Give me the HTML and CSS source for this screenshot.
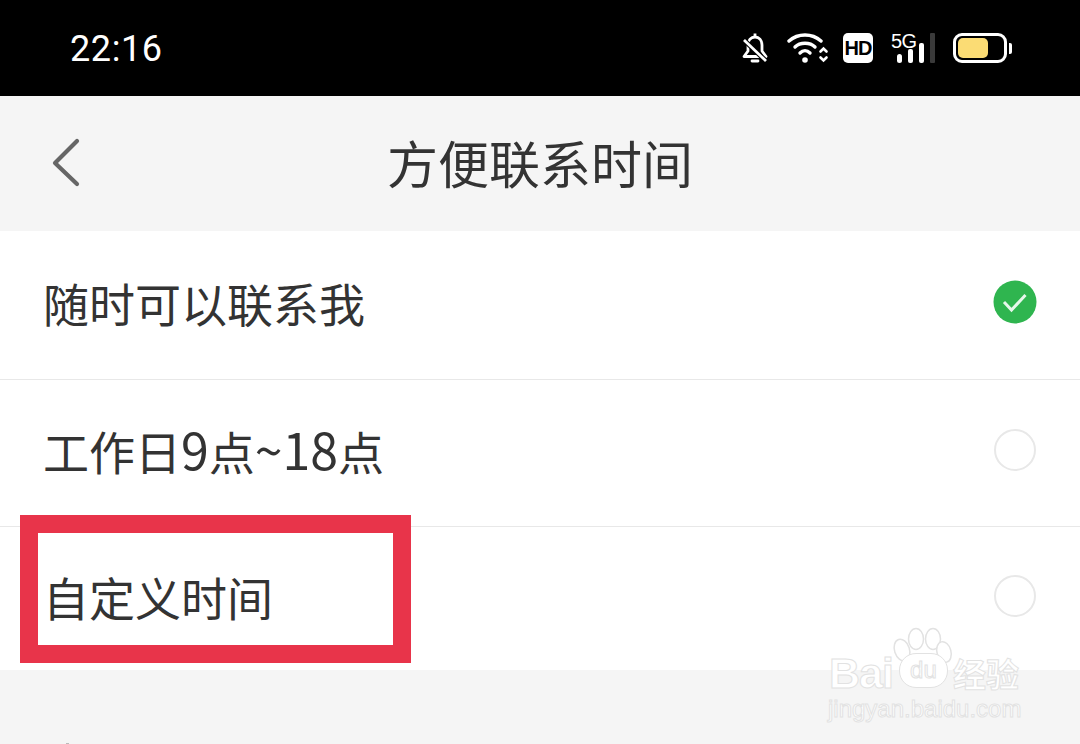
FILE: index.html
```html
<!DOCTYPE html>
<html lang="zh-CN">
<head>
    <meta charset="UTF-8">
    <title>方便联系时间</title>
    <link rel="stylesheet" href="styles.css">
</head>
<body>
    <div class="screen">
        <div class="status-bar">
            <span class="clock">22:16</span>
            <div class="status-icons">
                <svg class="ico-bell" width="26" height="30" viewBox="0 0 26 30" fill="none" stroke="#fff" stroke-width="2.8">
                    <path d="M2 23.500 L6 18 V12 C6 7 9 4 13 4 C17 4 20 7 20 12 V18 L24 23.500 Z" stroke-linejoin="round"/>
                    <path d="M13 0.500 V3"/>
                    <path d="M2 7 L24 28" stroke="#000" stroke-width="5"/>
                    <path d="M2 7 L24 28"/>
                    <path d="M10 28 H16" stroke-linecap="round"/>
                </svg>
                <svg class="ico-wifi" width="42" height="30" viewBox="0 0 42 30" fill="none" stroke="#fff" stroke-width="3.4" stroke-linecap="round">
                    <path d="M2 8 C11 0 25 0 34 8"/>
                    <path d="M8 14 C13 9 23 9 28 14"/>
                    <path d="M13 20 C16 17 20 17 23 20"/>
                    <circle cx="18" cy="27" r="2.8" fill="#fff" stroke="none"/>
                    <path d="M33.500 18.500 L36.500 15.500 L39.500 18.500 M33.500 24.500 L36.500 27.500 L39.500 24.500" stroke-width="2.600"/>
                </svg>
                <div class="hd-badge">HD</div>
                <div class="signal">
                    <span class="signal-label">5G</span>
                    <svg width="44" height="30" viewBox="0 0 44 30">
                        <rect x="6" y="21" width="5" height="9" rx="2.500" fill="#fff"/>
                        <rect x="17" y="16" width="5" height="14" rx="2" fill="#fff"/>
                        <rect x="28" y="10" width="5" height="20" rx="2" fill="#fff"/>
                        <rect x="39" y="0" width="5" height="30" rx="1" fill="#3a3a3a"/>
                    </svg>
                </div>
                <div class="battery">
                    <div class="battery-body"><div class="battery-fill"></div></div>
                    <div class="battery-cap"></div>
                </div>
            </div>
        </div>

        <div class="nav-bar">
            <svg class="back" width="30" height="50" viewBox="0 0 30 50" fill="none" stroke="#666" stroke-width="4.200" stroke-linecap="round" stroke-linejoin="round">
                <path d="M26 4 L4 26 L26 47"/>
            </svg>
            <h1 class="title">方便联系时间</h1>
        </div>

        <div class="list">
            <div class="row row-first">
                <span class="row-text">随时可以联系我</span>
                <svg class="radio" width="44" height="44" viewBox="0 0 44 44">
                    <circle cx="22" cy="22" r="21.500" fill="#2fb54f"/>
                    <path d="M11 22 L18.500 30 L32.500 15" fill="none" stroke="#e6f7ea" stroke-width="3"/>
                </svg>
            </div>
            <div class="row row-second">
                <span class="row-text">工作日<span class="row-num">9</span>点<span class="row-num">~18</span>点</span>
                <div class="radio-empty"></div>
            </div>
            <div class="row row-last">
                <span class="row-text row-text-custom">自定义时间</span>
                <div class="radio-empty"></div>
            </div>
        </div>

        <div class="highlight"></div>
        <div class="speck"></div>

        <div class="watermark">
            <svg class="paw" width="62" height="40" viewBox="0 0 62 40" fill="#fff" stroke="#e2e2e2" stroke-width="1.500">
                <ellipse cx="10" cy="22" rx="7.500" ry="11" transform="rotate(-18 10 22)"/>
                <ellipse cx="24" cy="11" rx="7.500" ry="10.500"/>
                <ellipse cx="41" cy="11" rx="7.500" ry="10.500"/>
                <ellipse cx="52" cy="24" rx="7" ry="10.500" transform="rotate(-15 52 24)"/>
            </svg>
            <div class="wm-top">
                <span class="wm-bai">Bai</span>
                <span class="wm-du">du</span>
                <span class="wm-cn">经验</span>
            </div>
            <div class="wm-url">jingyan.baidu.com</div>
        </div>
    </div>
</body>
</html>
```

FILE: styles.css
```css
* {
    box-sizing: border-box;
}
html, body {
    margin: 0;
    padding: 0;
}
body {
    width: 1080px;
    height: 744px;
    overflow: hidden;
    background-color: #f5f5f5;
    font-family: "Noto Sans CJK SC", "Noto Sans", sans-serif;
    color: #333;
}
.screen {
    position: relative;
    width: 1080px;
    height: 744px;
    overflow: hidden;
}

/* status bar */
.status-bar {
    height: 96px;
    background-color: #000;
    color: #fff;
    display: flex;
    align-items: center;
    justify-content: space-between;
    padding: 0 68px 0 70px;
}
.clock {
    font-family: Roboto, sans-serif;
    font-size: 36px;
    letter-spacing: 0.6px;
    padding-top: 2px;
}
.status-icons {
    display: flex;
    align-items: center;
}
.ico-bell {
    margin-right: 19px;
}
.ico-wifi {
    margin-right: 14px;
}
.hd-badge {
    width: 30px;
    height: 30px;
    margin-right: 18px;
    background-color: #fff;
    border-radius: 5px;
    color: #000;
    font-family: "Liberation Sans", sans-serif;
    font-weight: bold;
    font-size: 20px;
    line-height: 30px;
    text-align: center;
    letter-spacing: -1px;
}
.signal {
    position: relative;
    width: 44px;
    height: 30px;
    margin-right: 18px;
}
.signal svg {
    display: block;
}
.signal-label {
    position: absolute;
    left: 0;
    top: 0;
    font-family: "Liberation Sans", sans-serif;
    font-size: 20px;
    line-height: 16px;
    letter-spacing: -0.5px;
    color: #fff;
}
.battery {
    display: flex;
    align-items: center;
}
.battery-body {
    width: 54px;
    height: 30px;
    border: 3px solid #fff;
    border-radius: 9px;
    padding: 2px;
}
.battery-fill {
    width: 30px;
    height: 20px;
    background-color: #fbdc74;
    border-radius: 5px;
}
.battery-cap {
    width: 3px;
    height: 11px;
    margin-left: 2px;
    background-color: #fff;
    border-radius: 0 2px 2px 0;
}

/* nav */
.nav-bar {
    height: 135px;
    display: flex;
    align-items: center;
    justify-content: center;
    position: relative;
    background-color: #f5f5f5;
    padding-bottom: 2px;
}
.back {
    position: absolute;
    left: 51px;
    top: 41px;
}
.title {
    margin: 0;
    font-size: 51px;
    font-weight: 400;
    color: #333;
    line-height: 1;
}

/* list */
.list {
    background-color: #fff;
}
.row {
    display: flex;
    align-items: center;
    justify-content: space-between;
    padding: 0 43px 6px 43px;
    border-bottom: 1px solid #e8e8e8;
}
.row-first {
    height: 149px;
}
.row-second {
    height: 147px;
}
.row-last {
    height: 143px;
    border-bottom: none;
}
.row-text {
    font-size: 46px;
    font-weight: 400;
    line-height: 46px;
    color: #333;
}
.row-num {
    font-size: 50px;
    line-height: 0;
}
.radio {
    display: block;
}
.radio-empty {
    width: 42px;
    height: 42px;
    margin-right: 1px;
    border: 2px solid #e8e8e8;
    border-radius: 50%;
}

/* red annotation frame */
.highlight {
    position: absolute;
    left: 20px;
    top: 515px;
    width: 391px;
    height: 148px;
    border: 18px solid #e8344a;
}
.speck {
    position: absolute;
    left: 66px;
    top: 743px;
    width: 3px;
    height: 1px;
    background-color: #bbb;
}

/* watermark */
.watermark {
    position: absolute;
    left: 828px;
    top: 628px;
    width: 200px;
    height: 92px;
    font-family: "Liberation Sans", sans-serif;
    color: #fff;
    -webkit-text-stroke: 1px #e2e2e2;
}
.paw {
    position: absolute;
    left: 64px;
    top: 0;
    overflow: visible;
}
.wm-top {
    position: absolute;
    left: 1px;
    top: 25px;
    display: flex;
    align-items: center;
    height: 35px;
}
.wm-bai {
    font-size: 43px;
    font-weight: bold;
    line-height: 35px;
    letter-spacing: -1px;
    margin-top: 5px;
}
.wm-du {
    width: 49px;
    height: 35px;
    margin-left: 6px;
    background-color: #fff;
    border: 1.500px solid #e2e2e2;
    border-radius: 17px;
    font-size: 24px;
    line-height: 32px;
    text-align: center;
    position: relative;
}
.wm-cn {
    margin: 5px 0 0 5px;
    font-family: "Noto Sans CJK SC", sans-serif;
    font-size: 33px;
    font-weight: bold;
    line-height: 35px;
}
.wm-url {
    position: absolute;
    left: 0;
    top: 67px;
    font-size: 24px;
    line-height: 28px;
    white-space: nowrap;
}
```
